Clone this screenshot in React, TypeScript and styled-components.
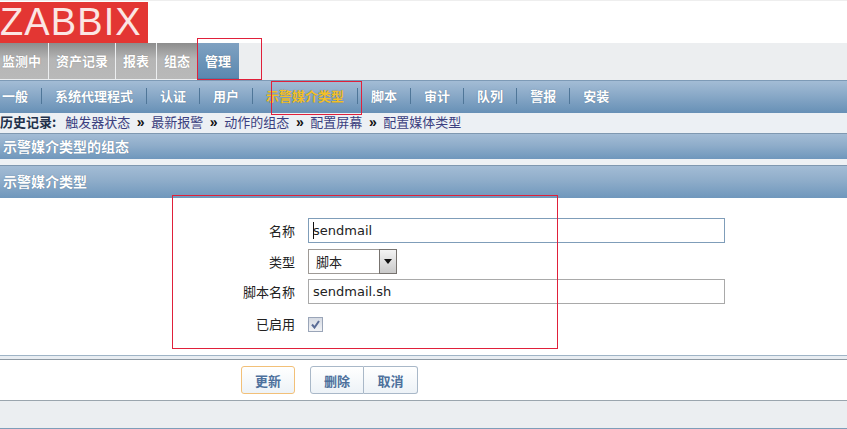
import { FC } from "react";
import styled, { createGlobalStyle } from "styled-components";

const GlobalStyle = createGlobalStyle`
  html, body {
    margin: 0;
    padding: 0;
    background: #ffffff;
    overflow: hidden;
  }
  body {
    font-family: "DejaVu Sans", "Noto Sans CJK SC", sans-serif;
    font-size: 13px;
  }
`;

const Page = styled("div")`
  position: relative;
  width: 847px;
  height: 429px;
  overflow: hidden;
`;

const Header = styled("div")`
  height: 43px;
  padding-top: 2px;
  box-sizing: border-box;
  border-top: 1px solid #eeeeee;
`;

const Logo = styled("div")`
  width: 148px;
  height: 41px;
  margin-top: -1px;
  background: #e33633;
  color: #fbe6e4;
  font-family: "Liberation Sans", sans-serif;
  font-size: 38px;
  line-height: 41px;
  letter-spacing: 1.1px;
  white-space: nowrap;
`;

const MainNav = styled("div")`
  display: flex;
  height: 37px;
  background: #eceef0;
  margin-left: -5px;
`;

const MainTab = styled("div")<{ $active?: boolean }>`
  display: flex;
  align-items: center;
  height: 36px;
  margin-right: 1px;
  margin-left: ${(p) => (p.$active ? "-1px" : "0")};
  padding: 0 ${(p) => (p.$active ? "8px" : "7px")} 1px;
  box-sizing: border-box;
  font-weight: bold;
  color: #ffffff;
  background: ${(p) =>
    p.$active
      ? "linear-gradient(#7fa1c1, #5b88b0)"
      : "linear-gradient(#8d8d8d, #b5b5b5 45%, #b9b9b9)"};
  border-bottom: ${(p) => (p.$active ? "1px solid #4f7aa1" : "none")};
  font-family: "Noto Sans CJK SC", sans-serif;
  text-shadow: 0 0 1px rgba(70, 70, 70, 0.5);
`;

const SubNav = styled("div")`
  display: flex;
  align-items: center;
  height: 33px;
  margin-left: -11px;
  padding-bottom: 3px;
  background: linear-gradient(#a3bcd5, #8cabc9 40%, #6790b6);
  border-top: 1px solid #7d9ab6;
  box-sizing: border-box;
`;

const SubItem = styled("div")<{ $active?: boolean; $last?: boolean }>`
  height: 16px;
  line-height: 16px;
  padding: 0 13px;
  font-family: "Noto Sans CJK SC", sans-serif;
  font-weight: bold;
  color: ${(p) => (p.$active ? "#f3c027" : "#ffffff")};
  border-right: ${(p) => (p.$last ? "none" : "1px solid #4f7698")};
  text-shadow: 0 0 1px rgba(40, 70, 100, 0.6);
`;

const History = styled("div")`
  display: flex;
  align-items: center;
  height: 20px;
  padding-bottom: 3px;
  box-sizing: border-box;
  background: #ecf0f4;
  font-family: "Noto Sans CJK SC", sans-serif;
  white-space: nowrap;
`;

const HistoryLabel = styled("span")`
  font-weight: bold;
  color: #22304a;
  margin-right: 9px;
`;

const HistoryLink = styled("span")`
  color: #3b3f80;
`;

const Chevron = styled("span")`
  width: 21px;
  text-align: center;
  font-family: "Liberation Sans", sans-serif;
  font-weight: bold;
  font-size: 14px;
  line-height: 16px;
  color: #111111;
`;

const SectionBar = styled("div")<{ $tall?: boolean }>`
  display: flex;
  align-items: center;
  height: ${(p) => (p.$tall ? "33px" : "26px")};
  padding: 0 0 2px 3px;
  box-sizing: border-box;
  background: linear-gradient(#a3bcd5, #8fadca 45%, #6f97bc);
  border-top: 1px solid #7f98b0;
  font-family: "Noto Sans CJK SC", sans-serif;
  font-size: 14px;
  font-weight: bold;
  color: #ffffff;
  text-shadow: 0 0 1px rgba(40, 70, 100, 0.6);
`;

const BarGap = styled("div")`
  height: 6px;
  background: #eef1f4;
`;

const Form = styled("div")`
  height: 157px;
  padding-top: 20px;
  box-sizing: border-box;
`;

const FormRow = styled("div")<{ $gap: number }>`
  display: flex;
  align-items: center;
  gap: 13px;
  margin-bottom: ${(p) => p.$gap}px;
`;

const FieldLabel = styled("div")`
  width: 295px;
  text-align: right;
  color: #222222;
  font-family: "Noto Sans CJK SC", sans-serif;
  line-height: 18px;
`;

const FieldCell = styled("div")`
  position: relative;
`;

const TextField = styled("input")<{ $focused?: boolean }>`
  display: block;
  width: 417px;
  height: 25px;
  box-sizing: border-box;
  padding: 0 4px;
  margin: 0;
  font-family: "DejaVu Sans", sans-serif;
  font-size: 13px;
  color: #222222;
  outline: none;
  background: #ffffff;
  border: 1px solid ${(p) => (p.$focused ? "#7f9db9" : "#a9a9a9")};
`;

const Caret = styled("span")`
  position: absolute;
  left: 5px;
  top: 4px;
  width: 1px;
  height: 17px;
  background: #111111;
`;

const SelectBox = styled("div")`
  display: flex;
  justify-content: space-between;
  width: 89px;
  height: 25px;
  box-sizing: border-box;
  border: 1px solid #9e9a96;
  background: #ffffff;
`;

const SelectValue = styled("span")`
  padding-left: 7px;
  line-height: 23px;
  color: #222222;
  font-family: "Noto Sans CJK SC", sans-serif;
`;

const SelectArrow = styled("span")`
  display: flex;
  align-items: center;
  justify-content: center;
  width: 16px;
  background: linear-gradient(#f4f4f4, #c9c9c9);
  border: 1px solid #77736f;
  margin: -1px -1px -1px 0;
`;

const CheckBox = styled("span")`
  display: flex;
  align-items: center;
  justify-content: center;
  width: 13px;
  height: 13px;
  border: 1px solid #9aa5b8;
  background: linear-gradient(#d5dae3, #f2f3f6);
`;

const RuleTop = styled("div")`
  height: 5px;
  box-sizing: border-box;
  border-top: 1px solid #9fb4c6;
  border-bottom: 1px solid #8f9aa3;
  background: #e8edf2;
`;

const ActionRow = styled("div")`
  display: flex;
  align-items: center;
  height: 40px;
  padding-left: 241px;
  box-sizing: border-box;
`;

const ActionGroup = styled("div")`
  display: flex;
  margin-left: 15px;
`;

const ActionButton = styled("button")<{ $primary?: boolean; $joined?: "left" | "right" }>`
  width: 54px;
  height: 28px;
  padding: 0;
  font-family: "Noto Sans CJK SC", sans-serif;
  font-size: 13px;
  font-weight: bold;
  color: #4d709c;
  background: linear-gradient(#ffffff, #edf2f7);
  border: 1px solid ${(p) => (p.$primary ? "#f2c078" : "#a9b8c8")};
  border-radius: ${(p) =>
    p.$joined === "left" ? "3px 0 0 3px" : p.$joined === "right" ? "0 3px 3px 0" : "3px"};
  border-left-width: ${(p) => (p.$joined === "right" ? "0" : "1px")};
`;

const Footer = styled("div")`
  height: 29px;
  box-sizing: border-box;
  background: #ebeef1;
  border-top: 1px solid #9aa5ae;
  border-bottom: 1px solid #7f9db9;
`;

// red boxes someone drew over the screenshot
const Mark = styled("div")<{ $x: number; $y: number; $w: number; $h: number }>`
  position: absolute;
  left: ${(p) => p.$x}px;
  top: ${(p) => p.$y}px;
  width: ${(p) => p.$w}px;
  height: ${(p) => p.$h}px;
  box-sizing: border-box;
  border: 1px solid #e0203a;
  pointer-events: none;
`;

const mainTabs = ["监测中", "资产记录", "报表", "组态", "管理"];
const subItems = ["一般", "系统代理程式", "认证", "用户", "示警媒介类型", "脚本", "审计", "队列", "警报", "安装"];
const history = ["触发器状态", "最新报警", "动作的组态", "配置屏幕", "配置媒体类型"];

const App: FC = () => {
  return (
    <Page>
      <GlobalStyle />
      <Header>
        <Logo>ZABBIX</Logo>
      </Header>
      <MainNav>
        {mainTabs.map((tab) => (
          <MainTab key={tab} $active={tab === "管理"}>
            {tab}
          </MainTab>
        ))}
      </MainNav>
      <SubNav>
        {subItems.map((item) => (
          <SubItem key={item} $active={item === "示警媒介类型"} $last={item === "安装"}>
            {item}
          </SubItem>
        ))}
      </SubNav>
      <History>
        <HistoryLabel>历史记录:</HistoryLabel>
        {history.map((link, i) => (
          <span key={link} style={{ display: "contents" }}>
            {i > 0 && <Chevron>»</Chevron>}
            <HistoryLink>{link}</HistoryLink>
          </span>
        ))}
      </History>
      <SectionBar>示警媒介类型的组态</SectionBar>
      <BarGap />
      <SectionBar $tall>示警媒介类型</SectionBar>
      <Form>
        <FormRow $gap={6}>
          <FieldLabel>名称</FieldLabel>
          <FieldCell>
            <TextField $focused readOnly value="sendmail" />
            <Caret />
          </FieldCell>
        </FormRow>
        <FormRow $gap={5}>
          <FieldLabel>类型</FieldLabel>
          <FieldCell>
            <SelectBox>
              <SelectValue>脚本</SelectValue>
              <SelectArrow>
                <svg width="8" height="5" viewBox="0 0 8 5">
                  <path d="M0 0h8L4 5z" fill="#111111" />
                </svg>
              </SelectArrow>
            </SelectBox>
          </FieldCell>
        </FormRow>
        <FormRow $gap={11}>
          <FieldLabel>脚本名称</FieldLabel>
          <FieldCell>
            <TextField readOnly value="sendmail.sh" />
          </FieldCell>
        </FormRow>
        <FormRow $gap={0}>
          <FieldLabel>已启用</FieldLabel>
          <FieldCell>
            <CheckBox>
              <svg width="9" height="9" viewBox="0 0 9 9">
                <path d="M1 4.5l2.5 3L8 1" fill="none" stroke="#5a6c96" strokeWidth="2" />
              </svg>
            </CheckBox>
          </FieldCell>
        </FormRow>
      </Form>
      <RuleTop />
      <ActionRow>
        <ActionButton $primary>更新</ActionButton>
        <ActionGroup>
          <ActionButton $joined="left">删除</ActionButton>
          <ActionButton $joined="right">取消</ActionButton>
        </ActionGroup>
      </ActionRow>
      <Footer />
      <Mark $x={197} $y={38} $w={65} $h={42} />
      <Mark $x={271} $y={81} $w={91} $h={34} />
      <Mark $x={172} $y={195} $w={386} $h={154} />
    </Page>
  );
};

export default App;
